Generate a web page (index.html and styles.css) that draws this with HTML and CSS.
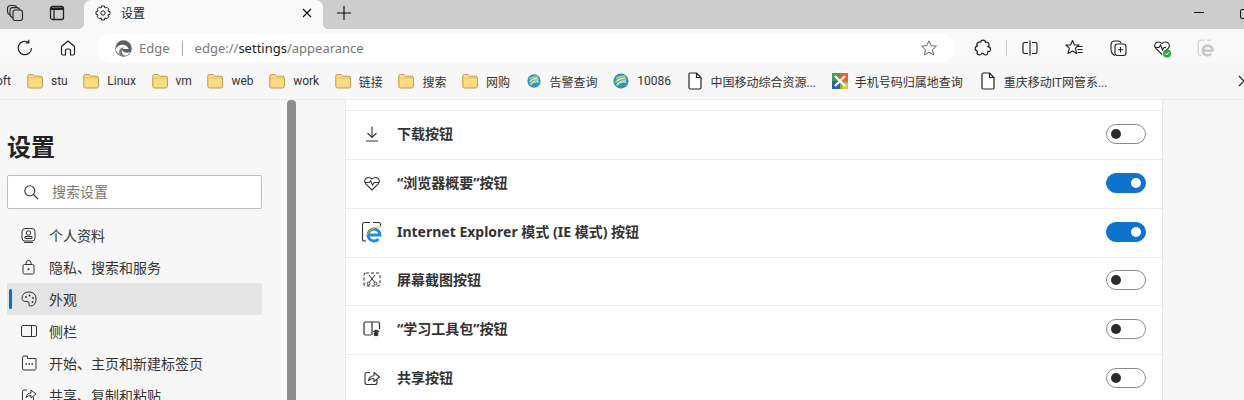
FILE: index.html
```html
<!DOCTYPE html>
<html lang="zh-CN">
<head>
<meta charset="utf-8">
<title>设置</title>
<link rel="stylesheet" href="styles.css">
</head>
<body>
<svg class="defs" width="0" height="0" aria-hidden="true">
  <defs>
    <symbol id="folder" viewBox="0 0 16 16"><path d="M.8 3.2Q.8 1.5 2.5 1.5H6L7.6 3.2H13.6Q15.4 3.2 15.4 5V13.2Q15.4 15 13.6 15H2.5Q.8 15 .8 13.2Z" fill="#fcdc83" stroke="#b89a4c"/><path d="M1.2 5H15" stroke="#eebf55" fill="none"/></symbol>
    <symbol id="doc" viewBox="0 0 14 18"><path d="M2.5 1H8.5L13 5.5V15.5Q13 17 11.5 17H2.5Q1 17 1 15.5V2.5Q1 1 2.5 1ZM8.5 1V5.5H13" fill="#fff" stroke="#222" stroke-width="1.2"/></symbol>
    <symbol id="ball" viewBox="0 0 16 16"><circle cx="8" cy="8" r="7.6" fill="#2f8fc9"/><path d="M3 5.5Q8 2.5 12.5 3.5M2.5 9.5Q7 4.5 13.5 6M3.5 12.5Q8 7.5 13.5 9.5" fill="none" stroke="#b6d96a" stroke-width="1.7"/><path d="M4 7.5Q8 4.6 12 4.8M4 11Q8 6.5 13 7.8" fill="none" stroke="#eaf6ff" stroke-width="1"/></symbol>
  </defs>
</svg>

<header class="tabstrip">
  <div class="strip-tools">
    <svg width="18" height="18" viewBox="0 0 18 18"><rect x="7" y="6" width="9.5" height="10.5" rx="2.2" fill="none" stroke="#222" stroke-width="1.1"/><path d="M7 13.8Q4 12.8 4 10V6.3Q4 3.6 6.6 3.6H11Q13 3.6 14 5.7M4 11Q1.5 10 1.5 7.5V4.5Q1.5 1.5 4.5 1.5H8Q10 1.5 11 3.5" fill="none" stroke="#222" stroke-width="1.1"/></svg>
    <svg width="16" height="16" viewBox="0 0 16 16"><rect x="1.5" y="1.5" width="13" height="13" rx="2" fill="none" stroke="#222" stroke-width="1.3"/><path d="M1.5 2.5H14.5V5H1.5Z" fill="#222"/><path d="M5 5V14" stroke="#222" stroke-width="1.3"/></svg>
  </div>
  <div class="tab">
    <svg width="16" height="16" viewBox="0 0 16 16"><path d="M6.6 1H9.4L9.9 3L11.8 2.2L13.8 4.2L12.9 6.1L15 6.6V9.4L12.9 9.9L13.8 11.8L11.8 13.8L9.9 12.9L9.4 15H6.6L6.1 12.9L4.2 13.8L2.2 11.8L3.1 9.9L1 9.4V6.6L3.1 6.1L2.2 4.2L4.2 2.2L6.1 3Z" fill="none" stroke="#222" stroke-linejoin="round"/><circle cx="8" cy="8" r="2.2" fill="none" stroke="#222"/></svg>
    <span class="tab-title">设置</span>
    <svg width="10" height="10" viewBox="0 0 10 10"><path d="M1 1L9 9M9 1L1 9" stroke="#111" stroke-width="1.2"/></svg>
  </div>
  <svg class="newtab" width="14" height="14" viewBox="0 0 14 14"><path d="M7 0V14M0 7H14" stroke="#111" stroke-width="1.2"/></svg>
  <div class="win-controls">
    <span class="win-min"></span>
    <span class="win-max"></span>
  </div>
</header>

<nav class="toolbar">
  <svg class="reload" width="18" height="18" viewBox="0 0 18 18"><path d="M15.5 9A6.7 6.7 0 1 1 12.5 3.4M12.8 .8V3.8H9.8" fill="none" stroke="#222" stroke-width="1.2"/></svg>
  <svg class="home" width="18" height="18" viewBox="0 0 18 18"><path d="M2.5 7.5L9 2L15.5 7.5V14.5Q15.5 16 14 16H11.5V11.5Q11.5 10 10 10H8Q6.5 10 6.5 11.5V16H4Q2.5 16 2.5 14.5Z" fill="none" stroke="#222" stroke-width="1.2" stroke-linejoin="round"/></svg>
  <div class="omnibox">
    <svg width="17" height="17" viewBox="0 0 16 16"><circle cx="8" cy="8" r="7.8" fill="#5a5f60"/><path d="M.6 9C2 3.5 11 2.5 13 8.5H6.5C6.5 11 10 13 14.5 11.2C12 15.5 6.5 16 4 13.5C2.2 12.3 1 10.7 .6 9Z" fill="#fbfbfb"/><path d="M4.4 13.6C2.6 9.5 5.6 6.6 8.6 7.2C7 8.4 6 10 6.5 11.8C7 13.5 8.5 14.6 10 15C8 15.6 6 15 4.4 13.6Z" fill="#777c7d"/></svg>
    <span class="edge-label">Edge</span>
    <span class="omni-sep"></span>
    <span class="url">edge://<b>settings</b>/appearance</span>
    <svg width="18" height="18" viewBox="0 0 18 18"><path d="M9 1.8L11.2 6.6L16.4 7.2L12.5 10.7L13.6 15.9L9 13.3L4.4 15.9L5.5 10.7L1.6 7.2L6.8 6.6Z" fill="none" stroke="#666" stroke-linejoin="round"/></svg>
  </div>
  <div class="tb-right">
    <svg width="18" height="18" viewBox="0 0 18 18"><path d="M6.8 3.2Q6.6 1.2 9 1.2Q11.6 1.2 11.4 3.4Q14.6 2.6 15 5.2Q15.2 7 13.8 7.6Q16.8 8 16.6 10.5Q16.2 13 13.8 12.4Q14.4 15.8 11.6 16Q9.6 16 9.4 14.4Q8.4 13.8 7.6 14.6Q7 16.4 4.6 15.8Q2.2 15 3.4 12.2Q1.2 11.8 1.2 9.6Q1.2 7.4 3.4 7.2Q2 4.6 4 3.4Q5.4 2.6 6.8 3.2Z" fill="none" stroke="#222" stroke-width="1.2" stroke-linejoin="round"/></svg>
    <span class="tb-sep"></span>
    <svg width="18" height="18" viewBox="0 0 18 18"><path d="M7 3.5H3.5Q2 3.5 2 5V13Q2 14.5 3.5 14.5H7M11 3.5H14.5Q16 3.5 16 5V13Q16 14.5 14.5 14.5H11M9 1.5V16.5" fill="none" stroke="#222" stroke-width="1.2"/></svg>
    <svg width="18" height="18" viewBox="0 0 18 18"><path d="M7.5 1.5L9.4 6H14L10.4 9.2L11.6 14.5L7.5 12L3 14.5L4.4 9.2L.8 6H5.6ZM13 7.5H17.5M12.5 10.5H17.5M12.5 13.5H17.5" fill="none" stroke="#222" stroke-width="1.1" stroke-linejoin="round"/></svg>
    <svg width="18" height="18" viewBox="0 0 18 18"><path d="M6 16.5Q2 15 2 10V6Q2 2 6 2H9Q11.5 2 12 4" fill="none" stroke="#222" stroke-width="1.1"/><rect x="6" y="5" width="11" height="11.5" rx="2.5" fill="none" stroke="#222" stroke-width="1.1"/><path d="M11.5 8V13.5M8.8 10.7H14.2" stroke="#222" stroke-width="1.1"/></svg>
    <svg class="overflow" width="18" height="18" viewBox="0 0 18 18"><path d="M9 15.5L2.8 9.5Q.5 6.5 2.8 4Q5.5 1.8 9 4.5Q12.5 1.8 15.2 4Q17.5 6.5 15.2 9.5L13 11.5M1.8 8.5H6L7.5 6L9.5 11L11 8.5H13" fill="none" stroke="#222" stroke-width="1.1"/><circle cx="14" cy="14.5" r="4" fill="#2fa24a"/><path d="M12.2 14.5L13.6 16L16 13.2" fill="none" stroke="#fff" stroke-width="1"/></svg>
    <svg width="18" height="18" viewBox="0 0 22 22"><path d="M9 1.5H3.5Q1.5 1.5 1.5 3.5V18Q1.5 20 3.5 20H5M12 1.5H17" fill="none" stroke="#c6c6c6" stroke-width="1.2"/><path d="M7 14H19A6 6 0 1 0 17.5 18" fill="none" stroke="#c6c6c6" stroke-width="3"/></svg>
  </div>
</nav>

<nav class="bookmarks">
  <span class="bm-cut">oft</span>
  <a class="bm"><svg width="16" height="16"><use href="#folder"/></svg><span>stu</span></a>
  <a class="bm"><svg width="16" height="16"><use href="#folder"/></svg><span>Linux</span></a>
  <a class="bm"><svg width="16" height="16"><use href="#folder"/></svg><span>vm</span></a>
  <a class="bm"><svg width="16" height="16"><use href="#folder"/></svg><span>web</span></a>
  <a class="bm"><svg width="16" height="16"><use href="#folder"/></svg><span>work</span></a>
  <a class="bm"><svg width="16" height="16"><use href="#folder"/></svg><span>链接</span></a>
  <a class="bm"><svg width="16" height="16"><use href="#folder"/></svg><span>搜索</span></a>
  <a class="bm"><svg width="16" height="16"><use href="#folder"/></svg><span>网购</span></a>
  <a class="bm bm-wide"><svg width="14" height="14"><use href="#ball"/></svg><span>告警查询</span></a>
  <a class="bm"><svg width="16" height="16"><use href="#ball"/></svg><span>10086</span></a>
  <a class="bm bm-wide"><svg width="14" height="18"><use href="#doc"/></svg><span>中国移动综合资源...</span></a>
  <a class="bm bm-tight">
    <svg width="16" height="16" viewBox="0 0 16 16"><rect width="16" height="16" fill="#7ab648"/><path d="M0 0H8V8H0Z" fill="#4a9d58"/><path d="M0 8H8V16H0Z" fill="#2d5fb0"/><path d="M8 0H16V8H8Z" fill="#e8622c"/><path d="M10 10H16V16H10Z" fill="#e9c23c"/><path d="M3 3L13 13M13 3L3 13" stroke="#fff" stroke-width="2.2"/></svg>
    <span>手机号码归属地查询</span>
  </a>
  <a class="bm bm-wide"><svg width="14" height="18"><use href="#doc"/></svg><span>重庆移动IT网管系...</span></a>
  <svg class="bm-more" width="10" height="12" viewBox="0 0 10 12"><path d="M1 1L6 6L1 11" fill="none" stroke="#222" stroke-width="1.2"/></svg>
</nav>

<main class="page">
  <aside class="sidebar">
    <h1 class="side-title">设置</h1>
    <div class="search">
      <svg width="16" height="16" viewBox="0 0 16 16"><circle cx="6.8" cy="6.8" r="5" fill="none" stroke="#333" stroke-width="1.1"/><path d="M10.5 10.5L15 15" stroke="#333" stroke-width="1.1"/></svg>
      <span class="search-text">搜索设置</span>
    </div>
    <ul class="menu">
      <li class="menu-item">
        <svg width="16" height="16" viewBox="0 0 16 16"><rect x="1" y="1.5" width="13" height="12.5" rx="3" fill="none" stroke="#333"/><circle cx="7.5" cy="6" r="2.2" fill="none" stroke="#333"/><path d="M4 11.5H11V9.5H4ZM3 15.5H12" fill="none" stroke="#333"/></svg>
        <span>个人资料</span>
      </li>
      <li class="menu-item">
        <svg width="16" height="16" viewBox="0 0 16 16"><rect x="2" y="5.5" width="11" height="9.5" rx="1.5" fill="none" stroke="#333"/><path d="M5 5.5V4Q5 1.5 7.5 1.5T10 4V5.5" fill="none" stroke="#333"/><circle cx="7.5" cy="10.3" r="1" fill="#333"/></svg>
        <span>隐私、搜索和服务</span>
      </li>
      <li class="menu-item active">
        <svg width="16" height="16" viewBox="0 0 16 16"><path d="M8 1Q15 1 15 8Q15 15 9 15Q7.5 15 8 13Q8.5 10.5 6 10.5Q1 11 1 7Q1.5 1 8 1Z" fill="none" stroke="#333"/><circle cx="5" cy="6" r=".9" fill="#333"/><circle cx="8.5" cy="4.5" r=".9" fill="#333"/><circle cx="12" cy="7" r=".9" fill="#333"/><circle cx="11.5" cy="11" r=".9" fill="#333"/></svg>
        <span>外观</span>
      </li>
      <li class="menu-item">
        <svg width="16" height="16" viewBox="0 0 16 16"><rect x=".5" y="2.5" width="15" height="11" rx="1.5" fill="none" stroke="#333"/><path d="M10.5 2.5V13.5" stroke="#333"/></svg>
        <span>侧栏</span>
      </li>
      <li class="menu-item">
        <svg width="16" height="16" viewBox="0 0 16 16"><path d="M1.5 2.5Q1.5 1 3 1H6.5V3.5H15V13.5Q15 15 13.5 15H3Q1.5 15 1.5 13.5Z" fill="none" stroke="#333"/><path d="M4.5 9H6M7.5 9H9M10.5 9H12" stroke="#333" stroke-width="1.4"/></svg>
        <span>开始、主页和新建标签页</span>
      </li>
      <li class="menu-item">
        <svg width="16" height="16" viewBox="0 0 16 16"><path d="M6 3H3Q1.5 3 1.5 4.5V13Q1.5 14.5 3 14.5H11Q12.5 14.5 12.5 13V10M5 10.5Q6 6 10 6V3L15 7L10 11V8.5Q7 8.5 5 10.5Z" fill="none" stroke="#333" stroke-linejoin="round"/></svg>
        <span>共享、复制和粘贴</span>
      </li>
    </ul>
  </aside>
  <div class="scrollbar"><div class="thumb"></div></div>
  <section class="content">
    <div class="card">
      <div class="row">
        <svg width="18" height="18" viewBox="0 0 18 18"><path d="M9 1.5V12.5M4.5 8L9 12.5L13.5 8M3 16H15" fill="none" stroke="#333" stroke-width="1.1"/></svg>
        <span class="row-label">下载按钮</span>
        <span class="toggle"><i></i></span>
      </div>
      <div class="row">
        <svg width="18" height="18" viewBox="0 0 18 18"><path d="M9 16L2.8 10Q.5 7 2.8 4.5Q5.5 2.3 9 5Q12.5 2.3 15.2 4.5Q17.5 7 15.2 10ZM1.8 8.5H6.2L7.6 6.8L9.6 11L11.2 8.5H16" fill="none" stroke="#333" stroke-width="1.1"/></svg>
        <span class="row-label">“浏览器概要”按钮</span>
        <span class="toggle on"><i></i></span>
      </div>
      <div class="row">
        <svg class="row-ie" width="22" height="22" viewBox="0 0 22 22"><path d="M9 1.5H3.5Q1.5 1.5 1.5 3.5V18Q1.5 20 3.5 20H5M12 1.5H17.5Q19.5 1.5 19.5 3.5V5" fill="none" stroke="#333" stroke-width="1.1"/><path d="M7 14H19A6 6 0 1 0 17.5 18" fill="none" stroke="#1c8fe3" stroke-width="3"/><path d="M5.5 15Q10 5 20 6" fill="none" stroke="#f0b400" stroke-width="1"/></svg>
        <span class="row-label">Internet Explorer 模式 (IE 模式) 按钮</span>
        <span class="toggle on"><i></i></span>
      </div>
      <div class="row">
        <svg width="18" height="18" viewBox="0 0 18 18"><rect x="1" y="2" width="16" height="13" rx="2" fill="none" stroke="#333" stroke-width="1.1" stroke-dasharray="3 2"/><path d="M6 4L11.5 11M12 4L6.5 11" stroke="#333"/><circle cx="5.5" cy="12.5" r="1.4" fill="none" stroke="#333"/><circle cx="12.5" cy="12.5" r="1.4" fill="none" stroke="#333"/></svg>
        <span class="row-label">屏幕截图按钮</span>
        <span class="toggle"><i></i></span>
      </div>
      <div class="row">
        <svg width="18" height="18" viewBox="0 0 18 18"><path d="M8 15H2.5Q1 15 1 13.5V3.5Q1 2 2.5 2H15Q16.5 2 16.5 3.5V9M9 2V15" fill="none" stroke="#333" stroke-width="1.2"/><path d="M9.5 11.5L13 9.5L17 11.5L13 13.5Z" fill="#333"/><path d="M10.8 13V15.5Q13 17 15.3 15.5V13" fill="#333"/></svg>
        <span class="row-label">“学习工具包”按钮</span>
        <span class="toggle"><i></i></span>
      </div>
      <div class="row">
        <svg width="18" height="18" viewBox="0 0 18 18"><path d="M7 3.5H4Q2 3.5 2 5.5V13.5Q2 15.5 4 15.5H12Q14 15.5 14 13.5V11M5.5 11.5Q6.5 7 11 6.8V3.5L16.5 8L11 12.5V9.5Q8 9.5 5.5 11.5Z" fill="none" stroke="#333" stroke-width="1.1" stroke-linejoin="round"/></svg>
        <span class="row-label">共享按钮</span>
        <span class="toggle"><i></i></span>
      </div>
    </div>
  </section>
</main>
</body>
</html>
```

FILE: styles.css
```css
* { box-sizing: border-box; }
html, body { margin: 0; height: 400px; overflow: hidden; }
body {
  width: 1244px;
  font-family: "Noto Sans", "Noto Sans CJK SC", sans-serif;
  color: #222;
  background: #f7f7f7;
}
.defs { display: block; height: 0; }
svg { flex: none; display: block; }

.tabstrip {
  height: 29px;
  background: #cdcdcd;
  display: flex;
  align-items: center;
}
.strip-tools {
  width: 84px;
  display: flex;
  align-items: center;
  gap: 25px;
  padding: 0 0 3px 6px;
}
.tab {
  width: 239px;
  height: 29px;
  background: #f9f9f9;
  border-radius: 7px 7px 0 0;
  display: flex;
  align-items: center;
  padding: 0 11px 4px 11px;
  font-size: 12px;
  position: relative;
}
.tab::before,
.tab::after {
  content: "";
  position: absolute;
  bottom: 0;
  width: 6px;
  height: 6px;
}
.tab::before { left: -6px; background: radial-gradient(circle at 0 0, transparent 6px, #f9f9f9 6.5px); }
.tab::after { right: -6px; background: radial-gradient(circle at 100% 0, transparent 6px, #f9f9f9 6.5px); }
.tab-title { margin-left: 10px; flex: 1; }
.newtab { margin-left: 14px; margin-bottom: 3px; }
.win-controls {
  margin-left: auto;
  display: flex;
  align-items: center;
  gap: 36px;
  margin-bottom: 4px;
  width: 50px;
}
.win-min { width: 10px; height: 1px; background: #111; flex: none; }
.win-max { width: 10px; height: 10px; border: 1px solid #111; border-radius: 2px; flex: none; margin-top: 3px; }

.toolbar {
  height: 34px;
  background: #f9f9f9;
  display: flex;
  align-items: center;
  padding: 4px 0 0 16px;
}
.home { margin-left: 25px; }
.omnibox {
  margin-left: 20px;
  width: 858px;
  height: 30px;
  border-radius: 15px;
  background: #fff;
  display: flex;
  align-items: center;
  padding: 0 17px 0 18px;
  font-size: 13px;
  color: #777;
}
.edge-label { margin-left: 7px; }
.omni-sep { width: 1px; height: 15px; background: #aaa; margin: 0 12px; }
.url { flex: 1; }
.url b { font-weight: 400; color: #222; }
.tb-right {
  margin-left: 19px;
  display: flex;
  align-items: center;
  gap: 26px;
}
.tb-sep { width: 1px; height: 16px; background: #ccc; margin: 0 -12px; flex: none; }
.overflow { overflow: visible; }

.bookmarks {
  height: 37px;
  background: #f7f7f7;
  border-bottom: 1px solid #ececec;
  display: flex;
  align-items: center;
  font-family: Roboto, "Noto Sans CJK SC", sans-serif;
  font-size: 12px;
  position: relative;
  color: #333;
  overflow: hidden;
}
.bm-cut { width: 31px; margin-left: -4px; flex: none; }
.bm { display: flex; align-items: center; gap: 8px; margin-right: 15.6px; white-space: nowrap; }
.bm-wide { gap: 9px; margin-left: 1px; }
.bm-tight { gap: 7px; margin-right: 17px; }
.bm-more { position: absolute; right: -4px; top: 12px; }

.page { display: flex; height: 300px; background: #f7f7f7; }
.sidebar { width: 287px; padding: 30px 25px 0 7px; flex: none; }
.side-title { margin: 0 0 12px; font-size: 24px; line-height: 33px; font-weight: 700; color: #222; }
.search {
  width: 255px;
  height: 34px;
  background: #fff;
  border: 1px solid #bdbdbd;
  border-radius: 2px;
  display: flex;
  align-items: center;
  padding-left: 15px;
  gap: 13px;
  font-size: 14px;
  color: #777;
}
.search-text { margin-bottom: 2px; }
.menu { list-style: none; margin: 10px 0 0; padding: 0; width: 255px; }
.menu-item {
  height: 32px;
  display: flex;
  align-items: center;
  gap: 12px;
  padding-left: 14px;
  font-size: 14px;
  color: #333;
  position: relative;
}
.menu-item.active { background: #e4e4e4; border-radius: 2px; }
.menu-item.active::before {
  content: "";
  position: absolute;
  left: 2px; top: 6px;
  width: 3px; height: 20px;
  background: #0f6cbd;
  border-radius: 2px;
}
.scrollbar { width: 9px; flex: none; }
.thumb { width: 9px; height: 300px; background: #8e8e8e; border-radius: 4px 4px 0 0; }
.content { flex: 1; padding-left: 49px; }
.card {
  width: 818px;
  height: 300px;
  padding-top: 10px;
  background: #fff;
  border-left: 1px solid #e6e6e6;
  border-right: 1px solid #e6e6e6;
}
.row {
  height: 48.85px;
  border-top: 1px solid #ececec;
  display: flex;
  align-items: center;
  padding: 0 16px 2px 17px;
}
.row-label { margin: 0 0 2px 16px; flex: 1; font-size: 14px; font-weight: 700; color: #333; }
.row-ie { margin: 0 -2px; }
.toggle {
  width: 40px;
  height: 20px;
  border-radius: 10px;
  border: 1px solid #8a8a8a;
  background: #fff;
  display: flex;
  align-items: center;
  padding-left: 4px;
  flex: none;
}
.toggle i { width: 10px; height: 10px; border-radius: 50%; background: #2b2b2b; }
.toggle.on { background: #0f73cc; border-color: #0f73cc; justify-content: flex-end; padding: 0 4px 0 0; }
.toggle.on i { background: #fff; }
```
